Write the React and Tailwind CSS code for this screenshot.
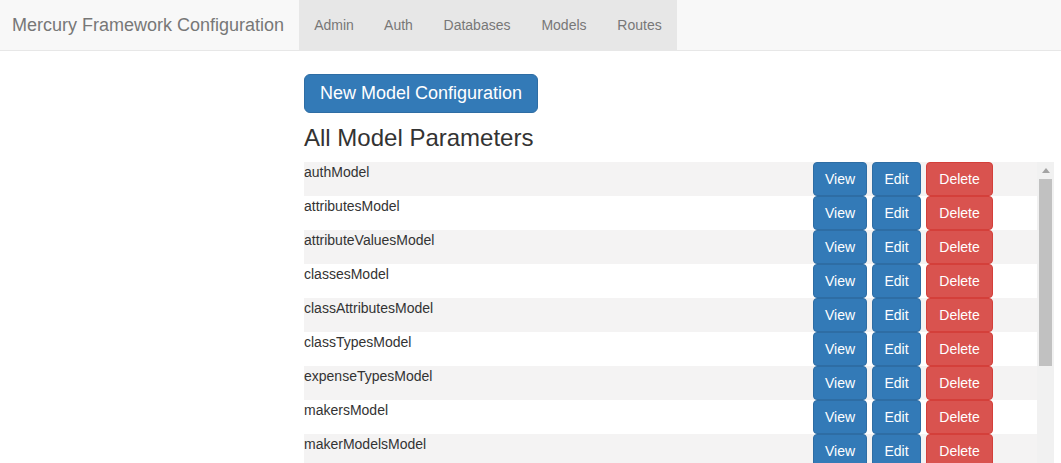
import React from 'react';

const models = [
  'authModel',
  'attributesModel',
  'attributeValuesModel',
  'classesModel',
  'classAttributesModel',
  'classTypesModel',
  'expenseTypesModel',
  'makersModel',
  'makerModelsModel',
  'paymentTypesModel',
  'usersModel',
];

const navItems = [
  { label: 'Admin', w: 'w-[70px]' },
  { label: 'Auth', w: 'w-[59px]' },
  { label: 'Databases', w: 'w-[98px]' },
  { label: 'Models', w: 'w-[76px]' },
  { label: 'Routes', w: 'w-[75px]' },
];

function ModelRow({ name, striped }) {
  return (
    <div className={`flex h-[34px] ${striped ? 'bg-[#f4f3f3]' : 'bg-white'}`}>
      <div className="w-[509px] leading-[20px] truncate">{name}</div>
      <div className="flex gap-[5px]">
        <button className="w-[54px] h-[34px] bg-[#337ab7] border border-[#2e6da4] rounded-[4px] text-white text-[14px]">
          View
        </button>
        <button className="w-[49px] h-[34px] bg-[#337ab7] border border-[#2e6da4] rounded-[4px] text-white text-[14px]">
          Edit
        </button>
        <button className="w-[67px] h-[34px] bg-[#d9534f] border border-[#d43f3a] rounded-[4px] text-white text-[14px]">
          Delete
        </button>
      </div>
    </div>
  );
}

export default function App() {
  return (
    <div className="w-[1061px] h-[463px] overflow-hidden bg-white text-[14px] text-[#333] font-['Liberation_Sans',Arial,sans-serif]">
      <nav className="flex h-[51px] bg-[#f8f8f8] border-b border-[#e7e7e7]">
        <a className="w-[299px] pl-[12px] pt-[1px] leading-[49px] text-[18px] text-[#777] whitespace-nowrap">
          Mercury Framework Configuration
        </a>
        <ul className="flex bg-[#e7e7e7]">
          {navItems.map((item) => (
            <li key={item.label} className={`${item.w} pt-[1px] leading-[49px] text-center text-[#777]`}>
              {item.label}
            </li>
          ))}
        </ul>
      </nav>

      <main className="pl-[304px] pt-[23px]">
        <button className="w-[234px] h-[39px] bg-[#337ab7] border border-[#2e6da4] rounded-[6px] text-white text-[18px] whitespace-nowrap">
          New Model Configuration
        </button>
        <h2 className="mt-[11px] mb-[11px] text-[24px] leading-[27px] text-[#333]">All Model Parameters</h2>

        <div className="flex w-[750px] h-[301px] overflow-hidden">
          <div className="w-[733px]">
            {models.map((m, i) => (
              <ModelRow key={m} name={m} striped={i % 2 === 0} />
            ))}
          </div>
          <div className="w-[17px] bg-[#f1f1f1] flex flex-col">
            <div className="h-[17px] flex items-center justify-center">
              <svg width="8" height="5" viewBox="0 0 8 5">
                <polygon points="0,5 8,5 4,0" fill="#a3a3a3" />
              </svg>
            </div>
            <div className="mx-[2px] h-[187px] bg-[#c1c1c1]" />
          </div>
        </div>
      </main>
    </div>
  );
}
